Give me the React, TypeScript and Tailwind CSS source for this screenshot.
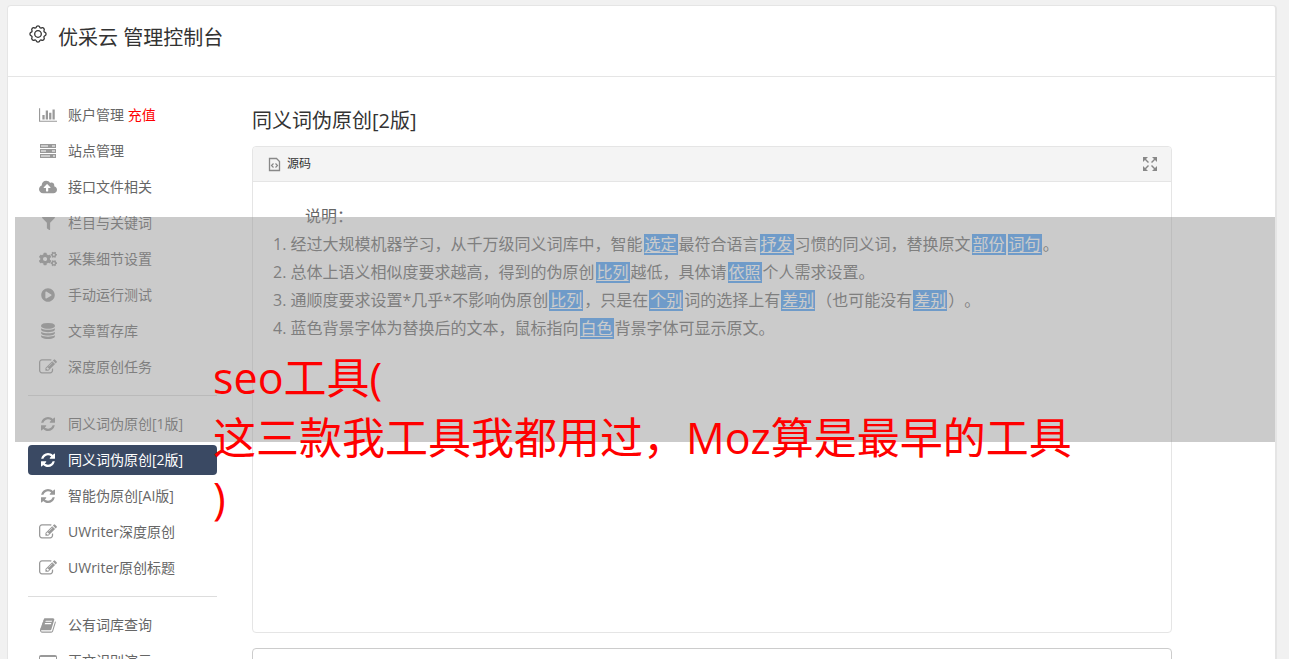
import { ReactNode } from "react";
import { FaCloudUploadAlt, FaCogs, FaFilter, FaPlayCircle } from "react-icons/fa";

const Icon = (props: { viewBox: string; d: string; className?: string }) => (
    <svg viewBox={props.viewBox} className={props.className ?? "w-4 h-4"} fill="currentColor" aria-hidden="true">
        <path fillRule="evenodd" d={props.d} />
    </svg>
);

const editPath = "M888 1184l116-116-152-152-116 116v56h96v96h56zm440-720q-16-16-33 1l-350 350q-17 17-1 33t33-1l350-350q17-17 1-33zm80 594v190q0 119-84.5 203.5t-203.5 84.5h-832q-119 0-203.5-84.5t-84.5-203.5v-832q0-119 84.5-203.5t203.5-84.5h832q63 0 117 25 15 7 18 23 3 17-9 29l-49 49q-14 14-32 8-23-6-45-6h-832q-66 0-113 47t-47 113v832q0 66 47 113t113 47h832q66 0 113-47t47-113v-126q0-13 9-22l64-64q15-15 35-7t20 29zm-96-738l288 288-672 672h-288v-288zm444 132l-92 92-288-288 92-92q28-28 68-28t68 28l152 152q28 28 28 68t-28 68z";
const refreshPath = "M1511 928q0 5-1 7-64 268-268 434.5t-478 166.500q-146 0-282.5-55t-243.5-157l-129 129q-19 19-45 19t-45-19-19-45v-448q0-26 19-45t45-19h448q26 0 45 19t19 45-19 45l-137 137q71 66 161 102t187 36q134 0 250-65t186-179q11-17 53-117 8-23 30-23h192q13 0 22.5 9.5t9.5 22.500zm25-800v448q0 26-19 45t-45 19h-448q-26 0-45-19t-19-45 19-45l138-138q-148-137-349-137-134 0-250 65t-186 179q-11 17-53 117-8 23-30 23h-199q-13 0-22.5-9.5t-9.5-22.500v-7q65-268 270-434.5t480-166.5q146 0 284 55.5t245 156.5l130-129q19-19 45-19t45 19 19 45z";
const bookPath = "M1639 478q40 57 18 129l-275 906q-19 64-76.5 107.5t-122.5 43.5h-923q-77 0-148.5-53.5t-99.5-131.5q-24-67-2-127 0-4 3-27t4-37q1-8-3-21.5t-3-19.5q2-11 8-21t16.5-23.5 16.5-23.5q23-38 45-91.5t30-91.5q3-10 .5-30t-.5-28q3-11 17-28t17-23q21-36 42-92t25-90q1-9-2.500-32t.5-28q4-13 22-30.500t22-22.500q19-26 42.500-84.500t27.500-96.500q1-8-3-25.500t-2-26.500q2-8 9-18t18-23 17-21q8-12 16.500-30.500t15-35 16-36 19.500-32 26.500-23.500 36-11.500 47.500 5.500l-1 3q38-9 51-9h761q74 0 114 56t18 130l-274 906q-36 119-71.500 153.500t-128.500 34.500h-869q-27 0-38 15-11 16-1 43 24 70 144 70h923q29 0 56-15.500t35-41.500l300-987q7-22 5-57 38 15 59 43zm-1064 2q-4 13 2 22.500t20 9.500h608q13 0 25.500-9.500t16.500-22.500l21-64q4-13-2-22.500t-20-9.500h-608q-13 0-25.500 9.500t-16.500 22.500zm-83 256q-4 13 2 22.500t20 9.500h608q13 0 25.500-9.500t16.500-22.500l21-64q4-13-2-22.500t-20-9.500h-608q-13 0-25.500 9.500t-16.500 22.500z";
const databasePath = "M896 768q237 0 443-43t325-127v170q0 69-103 128t-280 93.500-385 34.500-385-34.500-280-93.500-103-128v-170q119 84 325 127t443 43zm0 768q237 0 443-43t325-127v170q0 69-103 128t-280 93.500-385 34.500-385-34.500-280-93.500-103-128v-170q119 84 325 127t443 43zm0-384q237 0 443-43t325-127v170q0 69-103 128t-280 93.500-385 34.500-385-34.500-280-93.500-103-128v-170q119 84 325 127t443 43zm0-1152q208 0 385 34.500t280 93.500 103 128v128q0 69-103 128t-280 93.500-385 34.500-385-34.500-280-93.500-103-128v-128q0-69 103-128t280-93.500 385-34.500z";
const chartPath = "M640 768v512H384V768h256zm384-512v1024H768V256h256zm1024 1152v128H0V0h128v1408h1920zM1408 512v768h-256V512h256zm384-384v1152h-256V128h256z";
const laptopPath = "M2 0h14a2 2 0 0 1 2 2v9H0V2a2 2 0 0 1 2-2zM1 2v8h16V2zM0 12h18v1H0z";
const expandPath = "M0 0h5L3 2l3 3-1 1-3-3-2 2zM14 0v5l-2-2-3 3-1-1 3-3-2-2zM0 14V9l2 2 3-3 1 1-3 3 2 2zM14 14H9l2-2-3-3 1-1 3 3 2-2z";

const Edit = () => <Icon viewBox="0 0 1792 1792" d={editPath} className="w-[18px] h-[18px]" />;
const Refresh = () => <Icon viewBox="0 0 1536 1536" d={refreshPath} className="w-[14px] h-[14px]" />;

const Server = () => (
    <svg viewBox="0 0 16 14" className="w-4 h-[14px]" fill="currentColor" aria-hidden="true">
        <path fillOpacity="0.5" d="M0 0h16v4H0zM0 5h16v4H0zM0 10h16v4H0z" />
        <path fillRule="evenodd" d="M0 0h16v4H0zM1 1v2h14V1zM0 5h16v4H0zM1 6v2h14V6zM0 10h16v4H0zM1 11v2h14v-2zM8 1h4v2H8zM6 6h6v2H6zM10 11h3v2h-3z" />
    </svg>
);

type Item = { label: string; icon: ReactNode; extra?: string; active?: boolean };

const groups: Item[][] = [
    [
        { label: "账户管理", extra: "充值", icon: <Icon viewBox="0 0 2048 1536" d={chartPath} className="w-[18px] h-[14px]" /> },
        { label: "站点管理", icon: <Server /> },
        { label: "接口文件相关", icon: <FaCloudUploadAlt size={18} /> },
        { label: "栏目与关键词", icon: <FaFilter size={13} /> },
        { label: "采集细节设置", icon: <FaCogs size={18} /> },
        { label: "手动运行测试", icon: <FaPlayCircle size={14} /> },
        { label: "文章暂存库", icon: <Icon viewBox="0 0 1792 1792" d={databasePath} /> },
        { label: "深度原创任务", icon: <Edit /> },
    ],
    [
        { label: "同义词伪原创[1版]", icon: <Refresh /> },
        { label: "同义词伪原创[2版]", icon: <Refresh />, active: true },
        { label: "智能伪原创[AI版]", icon: <Refresh /> },
        { label: "UWriter深度原创", icon: <Edit /> },
        { label: "UWriter原创标题", icon: <Edit /> },
    ],
    [
        { label: "公有词库查询", icon: <Icon viewBox="0 0 1792 1792" d={bookPath} className="w-[17px] h-[17px]" /> },
        { label: "正文识别演示", icon: <Icon viewBox="0 0 18 13" d={laptopPath} className="w-[18px] h-[13px]" /> },
    ],
];

const Word = (props: { children: string }) => (
    <a href="#" className="mx-px inline-block h-[21px] border border-[#479ffb] bg-[#479ffb] leading-[19px] text-white underline underline-offset-2">
        {props.children}
    </a>
);

const Sidebar = () => (
    <nav className="w-[189px] shrink-0 pt-[23px] text-sm text-[#666]">
        {groups.map((items, i) => (
            <ul key={i} className={i > 0 ? "flex flex-col gap-[6px] mt-[13px] pt-[13px] border-t border-[#ddd]" : "flex flex-col gap-[6px]"}>
                {items.map((item) => (
                    <li key={item.label}>
                        <a
                            href="#"
                            className={item.active
                                ? "flex h-[30px] items-center rounded bg-[#3a4963] pl-[10px] text-white"
                                : "flex h-[30px] items-center rounded pl-[10px]"}
                        >
                            <span className={item.active ? "flex w-5 justify-center" : "flex w-5 justify-center text-[#999]"}>{item.icon}</span>
                            <span className="ml-[10px] whitespace-nowrap">
                                {item.label} {item.extra && <span className="text-[#f00]">{item.extra}</span>}
                            </span>
                        </a>
                    </li>
                ))}
            </ul>
        ))}
    </nav>
);

const Editor = () => (
    <section className="h-[487px] rounded border border-[#e5e5e5] bg-white">
        <div className="flex h-[35px] items-center justify-between rounded-t border-b border-[#e5e5e5] bg-[#f4f4f4] px-[14px]">
            <button type="button" className="flex items-center gap-[6px] text-xs text-[#333]">
                <svg viewBox="0 0 14 16" className="w-[14px] h-4 text-[#888]" fill="none" stroke="currentColor" aria-hidden="true">
                    <path d="M2.500 2.500h7l3 3v9h-10z" strokeWidth="1.300" />
                    <path d="M6.500 7.500l-2 2 2 2M8.500 7.500l2 2-2 2" strokeWidth="1.200" />
                </svg>
                源码
            </button>
            <button type="button" aria-label="全屏">
                <Icon viewBox="0 0 14 14" d={expandPath} className="w-[14px] h-[14px] text-[#888]" />
            </button>
        </div>
        <div className="px-5 pt-5 text-base leading-7 text-[#666]">
            <p className="pl-8">说明：</p>
            <ol className="list-inside list-decimal">
                <li>经过大规模机器学习，从千万级同义词库中，智能<Word>选定</Word>最符合语言<Word>抒发</Word>习惯的同义词，替换原文<Word>部份</Word><Word>词句</Word>。</li>
                <li>总体上语义相似度要求越高，得到的伪原创<Word>比列</Word>越低，具体请<Word>依照</Word>个人需求设置。</li>
                <li>通顺度要求设置*几乎*不影响伪原创<Word>比列</Word>，只是在<Word>个别</Word>词的选择上有<Word>差别</Word>（也可能没有<Word>差别</Word>）。</li>
                <li>蓝色背景字体为替换后的文本，鼠标指向<Word>白色</Word>背景字体可显示原文。</li>
            </ol>
        </div>
    </section>
);

const App = () => {
    return (
        <div lang="zh-CN" className="relative h-screen overflow-hidden bg-[#f1f1f1] pl-[7px] pr-3 pt-[5px] font-['Open_Sans','Noto_Sans_CJK_SC',sans-serif] [text-spacing-trim:space-all]">
            <div className="min-h-full rounded-t border border-r-2 border-[#e5e5e5] bg-white">
                <header className="flex h-[71px] items-start gap-[10px] border-b border-[#e5e5e5] pl-5 pt-[18px] text-[#333]">
                    <svg viewBox="-10 -10 20 20" className="h-5 w-5" fill="none" stroke="currentColor" strokeWidth="1.300" aria-hidden="true">
                        <path d="M6.760-1.810A1.900 1.900 0 0 1 6.760 1.810A1.200 1.200 0 0 0 6.060 3.500A1.900 1.900 0 0 1 3.500 6.060A1.200 1.200 0 0 0 1.810 6.760A1.900 1.900 0 0 1-1.810 6.760A1.200 1.200 0 0 0-3.500 6.060A1.900 1.900 0 0 1-6.060 3.500A1.200 1.200 0 0 0-6.760 1.810A1.900 1.900 0 0 1-6.760-1.810A1.200 1.200 0 0 0-6.060-3.500A1.900 1.900 0 0 1-3.500-6.060A1.200 1.200 0 0 0-1.810-6.760A1.900 1.900 0 0 1 1.810-6.760A1.200 1.200 0 0 0 3.500-6.060A1.900 1.900 0 0 1 6.060-3.500A1.200 1.200 0 0 0 6.760-1.810z" />
                        <circle r="3.300" />
                    </svg>
                    <h1 className="text-xl leading-7">优采云 管理控制台</h1>
                </header>
                <div className="flex gap-[35px] pl-5 pr-[103px]">
                    <Sidebar />
                    <main className="min-w-0 grow pt-7">
                        <h2 className="mb-[9px] text-xl leading-8 text-[#333]">同义词伪原创[2版]</h2>
                        <Editor />
                        <textarea aria-label="内容" className="mt-[15px] block h-40 w-full resize-none rounded border border-[#ccc]" />
                    </main>
                </div>
            </div>

            {/* caption band */}
            <div className="absolute left-[15px] right-[14px] top-[217px] h-[225px] bg-[#979797]/50" />
            <p className="absolute left-[213px] top-[348px] text-[43px] leading-[60px] text-[#f00]">
                seo工具(
                <br />
                这三款我工具我都用过，Moz算是最早的工具
                <br />)
            </p>
        </div>
    );
};

export default App;
